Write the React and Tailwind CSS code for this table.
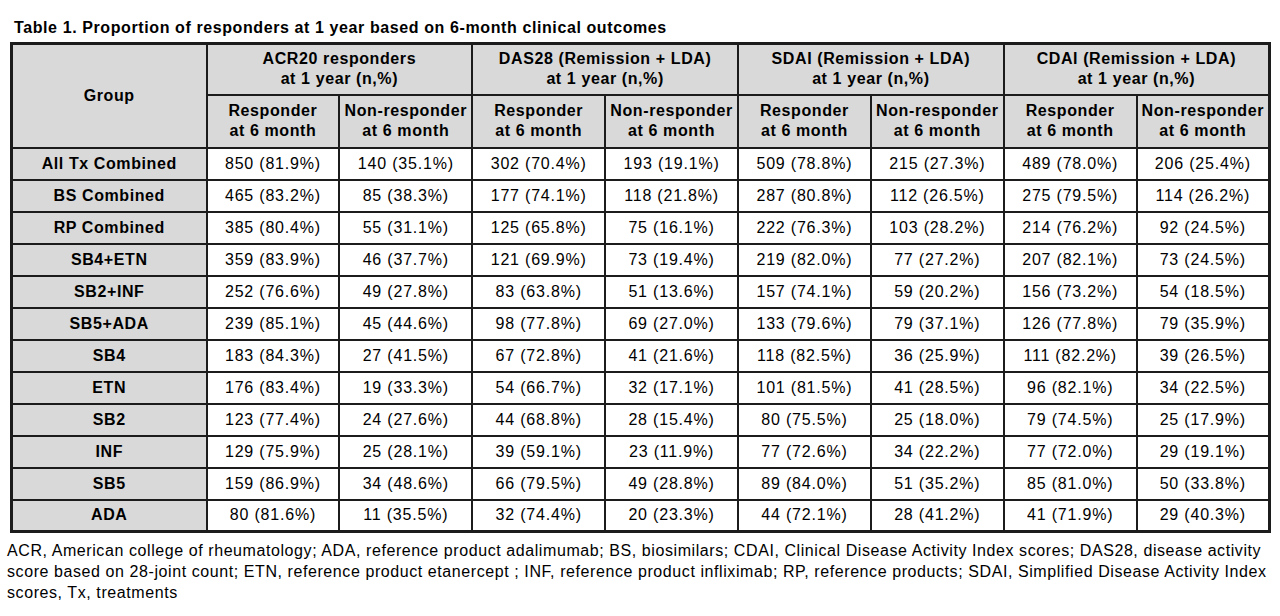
import React from 'react'

const rows = [
  ['All Tx Combined', '850 (81.9%)', '140 (35.1%)', '302 (70.4%)', '193 (19.1%)', '509 (78.8%)', '215 (27.3%)', '489 (78.0%)', '206 (25.4%)'],
  ['BS Combined', '465 (83.2%)', '85 (38.3%)', '177 (74.1%)', '118 (21.8%)', '287 (80.8%)', '112 (26.5%)', '275 (79.5%)', '114 (26.2%)'],
  ['RP Combined', '385 (80.4%)', '55 (31.1%)', '125 (65.8%)', '75 (16.1%)', '222 (76.3%)', '103 (28.2%)', '214 (76.2%)', '92 (24.5%)'],
  ['SB4+ETN', '359 (83.9%)', '46 (37.7%)', '121 (69.9%)', '73 (19.4%)', '219 (82.0%)', '77 (27.2%)', '207 (82.1%)', '73 (24.5%)'],
  ['SB2+INF', '252 (76.6%)', '49 (27.8%)', '83 (63.8%)', '51 (13.6%)', '157 (74.1%)', '59 (20.2%)', '156 (73.2%)', '54 (18.5%)'],
  ['SB5+ADA', '239 (85.1%)', '45 (44.6%)', '98 (77.8%)', '69 (27.0%)', '133 (79.6%)', '79 (37.1%)', '126 (77.8%)', '79 (35.9%)'],
  ['SB4', '183 (84.3%)', '27 (41.5%)', '67 (72.8%)', '41 (21.6%)', '118 (82.5%)', '36 (25.9%)', '111 (82.2%)', '39 (26.5%)'],
  ['ETN', '176 (83.4%)', '19 (33.3%)', '54 (66.7%)', '32 (17.1%)', '101 (81.5%)', '41 (28.5%)', '96 (82.1%)', '34 (22.5%)'],
  ['SB2', '123 (77.4%)', '24 (27.6%)', '44 (68.8%)', '28 (15.4%)', '80 (75.5%)', '25 (18.0%)', '79 (74.5%)', '25 (17.9%)'],
  ['INF', '129 (75.9%)', '25 (28.1%)', '39 (59.1%)', '23 (11.9%)', '77 (72.6%)', '34 (22.2%)', '77 (72.0%)', '29 (19.1%)'],
  ['SB5', '159 (86.9%)', '34 (48.6%)', '66 (79.5%)', '49 (28.8%)', '89 (84.0%)', '51 (35.2%)', '85 (81.0%)', '50 (33.8%)'],
  ['ADA', '80 (81.6%)', '11 (35.5%)', '32 (74.4%)', '20 (23.3%)', '44 (72.1%)', '28 (41.2%)', '41 (71.9%)', '29 (40.3%)'],
]

const groups = ['ACR20 responders', 'DAS28 (Remission + LDA)', 'SDAI (Remission + LDA)', 'CDAI (Remission + LDA)']

const th = 'border-2 border-[#1c1c1c] bg-[#d9d9d9] font-bold text-center leading-[20px] tracking-[0.6px]'
const td = 'border-2 border-[#1c1c1c] text-center h-[32px] p-0'

export default function App() {
  return (
    <div className="w-[1280px] h-[616px] bg-white text-black font-['Liberation_Sans',Arial,sans-serif] pt-[18px]">
      <p className="pl-[14px] text-[16px] font-bold leading-[20px] tracking-[0.6px]">Table 1. Proportion of responders at 1 year based on 6-month clinical outcomes</p>
      <table className="ml-[10px] mt-[4px] w-[1261px] table-fixed border-collapse border-[3px] border-[#1c1c1c] text-[16px]">
        <colgroup>
          <col className="w-[195px]" />
          {Array.from({ length: 8 }).map((_, i) => <col key={i} />)}
        </colgroup>
        <thead>
          <tr className="h-[51px]">
            <th rowSpan={2} className={th}>Group</th>
            {groups.map((g) => (
              <th key={g} colSpan={2} className={th}>{g}<br />at 1 year (n,%)</th>
            ))}
          </tr>
          <tr className="h-[53px]">
            {groups.map((g) => (
              <React.Fragment key={g}>
                <th className={th}>Responder<br />at 6 month</th>
                <th className={th}>Non-responder<br />at 6 month</th>
              </React.Fragment>
            ))}
          </tr>
        </thead>
        <tbody>
          {rows.map((r) => (
            <tr key={r[0]}>
              <td className={`${td} bg-[#d9d9d9] font-bold tracking-[0.6px]`}>{r[0]}</td>
              {r.slice(1).map((v, i) => <td key={i} className={`${td} tracking-[0.8px]`}>{v}</td>)}
            </tr>
          ))}
        </tbody>
      </table>
      <p className="mt-[7px] pl-[7px] pr-[12px] text-[16px] leading-[21px] tracking-[0.58px]">
        ACR, American college of rheumatology; ADA, reference product adalimumab; BS, biosimilars; CDAI, Clinical Disease Activity Index scores; DAS28, disease activity score based on 28-joint count; ETN, reference product etanercept ; INF, reference product infliximab; RP, reference products; SDAI, Simplified Disease Activity Index scores, Tx, treatments
      </p>
    </div>
  )
}
